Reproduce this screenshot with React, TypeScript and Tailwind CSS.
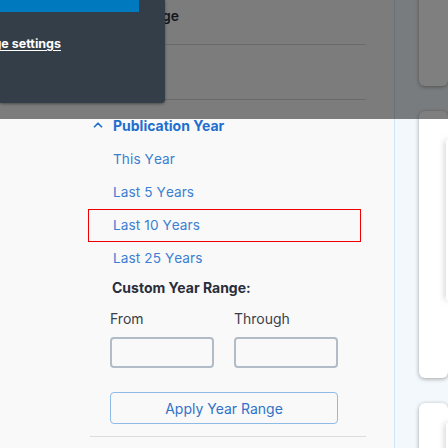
import { ChevronUp } from "lucide-react";

const ranges = ["This Year", "Last 5 Years", "Last 10 Years", "Last 25 Years"];

export default function App() {
  return (
    <div className="relative h-[448px] w-[448px] overflow-hidden bg-[#f3f8fc] font-['Inter',sans-serif]">
      <div className="flex h-full">
        {/* Filter sidebar */}
        <aside className="h-full w-[395px] shrink-0 border-r border-[#cfe5f2] bg-[#f9f9f9]">
          <div className="ml-[90px] w-[276px]">
            <div className="flex h-[45px] items-end border-b border-[#d4d4d4] pb-[18px] pl-[22px] text-[14px] font-semibold text-[#2a2e3a]">
              Language
            </div>
            <div className="flex h-[55px] items-center border-b border-[#d4d4d4] pl-[22px] text-[14px] font-semibold text-[#2a2e3a]">
              Format
            </div>

            <div className="flex h-[42px] items-center gap-[8px] pl-[1px] pt-[8px] text-[14px] font-bold text-[#1f6fcf]">
              <ChevronUp className="h-[14px] w-[14px]" strokeWidth={3} />
              Publication Year
            </div>

            <div className="-ml-[2px] mt-[1px] w-[273px]">
              {ranges.map((r) => (
                <div
                  key={r}
                  className={`flex h-[33px] items-center pl-[24px] text-[13.6px] tracking-[0.1px] text-[#3b7fd2] [font-kerning:none] ${
                    r === "Last 10 Years" ? "border border-[#f00000]" : "border border-transparent"
                  }`}
                >
                  {r}
                </div>
              ))}
            </div>

            <div className="mt-[2px] pl-[22px] text-[14px] font-bold text-[#2a2e3a]">Custom Year Range:</div>

            <div className="mt-[10px] flex gap-[20px] pl-[20px]">
              <div className="w-[104px]">
                <div className="text-[14px] text-[#3a3f4a]">From</div>
                <input className="mt-[8px] h-[31px] w-[104px] rounded-[4px] border-2 border-[#b2bcc7] bg-[#f9f9f9] outline-none" />
              </div>
              <div className="w-[104px]">
                <div className="text-[14px] text-[#3a3f4a]">Through</div>
                <input className="mt-[8px] h-[31px] w-[104px] rounded-[4px] border-2 border-[#b2bcc7] bg-[#f9f9f9] outline-none" />
              </div>
            </div>

            <div className="pl-[20px]">
              <button className="mt-[24px] h-[32px] w-[228px] rounded-[4px] border border-[#8dbbe6] text-[14px] text-[#2f73c8]">
                Apply Year Range
              </button>
            </div>

            <div className="mt-[12px] border-b border-[#dcdcdc]" />
          </div>
        </aside>

        {/* Results column */}
        <main className="flex-1 pl-[24px]">
          <div className="-mt-[20px] h-[106px] rounded-[6px] bg-white shadow-[0_1px_4px_rgba(0,0,0,0.35)]" />
          <div className="mt-[25px] h-[267px] rounded-[6px] bg-white pl-[27px] pt-[29px] shadow-[0_1px_4px_rgba(0,0,0,0.35)]">
            <div className="h-[160px] rounded-[6px] bg-white shadow-[0_0_6px_rgba(0,0,0,0.45)]" />
          </div>
          <div className="mt-[25px] h-[80px] rounded-[6px] bg-white pl-[27px] pt-[20px] shadow-[0_1px_4px_rgba(0,0,0,0.35)]">
            <div className="h-[60px] rounded-[6px] bg-white shadow-[0_0_6px_rgba(0,0,0,0.45)]" />
          </div>
        </main>
      </div>

      {/* Dimmed backdrop */}
      <div className="absolute inset-x-0 top-0 h-[119px] bg-black/50" />

      {/* Cookie popup */}
      <div className="absolute left-0 top-0 h-[103px] w-[165px] rounded-br-[4px] bg-[#333e48] shadow-[0_1px_3px_rgba(0,0,0,0.4)]">
        <div className="h-[12px] w-[139px] bg-[#0079be]" />
        <div className="mt-[23px] flex w-[61px] justify-end overflow-hidden whitespace-nowrap">
          <a className="text-[12.5px] font-bold text-white underline underline-offset-[2px]">Manage settings</a>
        </div>
      </div>
    </div>
  );
}
